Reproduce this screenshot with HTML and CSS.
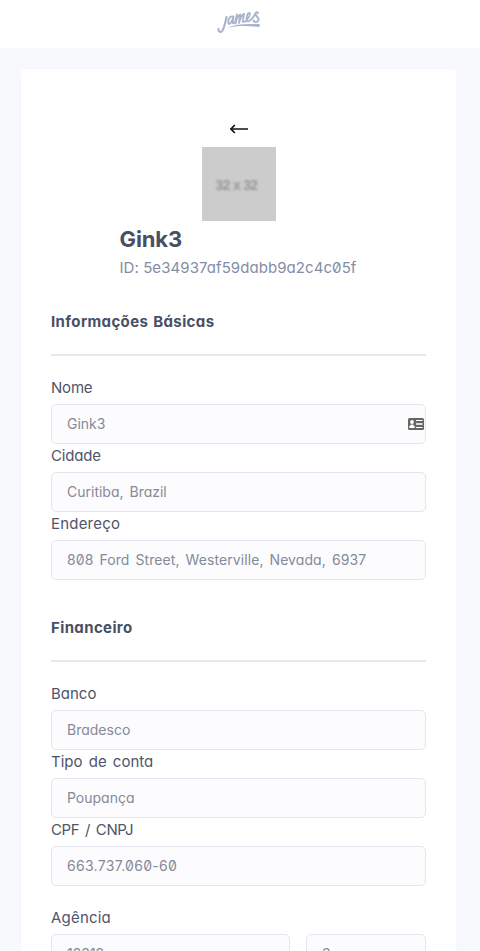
FILE: index.html
```html
<!DOCTYPE html>
<html lang="pt-BR">
<head>
<meta charset="utf-8">
<title>James</title>
<link rel="stylesheet" href="styles.css">
</head>
<body>
<header class="topbar">
  <svg class="logo" viewBox="0 0 44 24" role="img" aria-label="James">
    <g fill="none" stroke="#a9b3cd" stroke-linecap="round" stroke-linejoin="round">
      <path stroke-width="2.100" d="M9.500 7C8.500 12 7.500 17 5.500 20.500C4 23 1 22 1.500 19"/>
      <path stroke-width="1.800" d="M16 6.500C13 5.500 10.500 10 11.500 13.500C13 15 15.500 11 16.500 6.500L15.700 13.300L18 12.500L20 4.500L18.500 13.500C19.500 9.500 21.500 5 23.200 4.500L22 13C23.200 9 25 4.300 27 4L25.800 11.800L28.500 11.500C31.500 8 34 4.500 32.500 3C30.500 2.500 28.800 8 30 11C31.500 13 36 8 39 3"/>
      <path stroke-width="1.900" d="M41 3C40 1.500 38 2.500 38.500 4.500C39 6.500 42.500 7.500 41.500 10.500C40 12.500 37 12.500 36.500 10.500"/>
    </g>
    <path fill="#a9b3cd" d="M10 17.800C19 13.800 31 13.800 43 14.300L42.300 17.300C31 15.200 20 15.500 10 17.800Z"/>
  </svg>
</header>
<main class="card">
  <section class="profile">
    <a class="back" href="#" aria-label="Voltar"><svg width="20" height="12" viewBox="0 0 20 12"><path d="M1.500 6H19" stroke="#111" stroke-width="1.500"/><path d="M5.800 2L2 6L5.800 10" fill="none" stroke="#111" stroke-width="1.700"/></svg></a>
    <div class="avatar"><span>32 x 32</span></div>
    <div class="identity">
      <h1>Gink3</h1>
      <p>ID: 5e34937af59dabb9a2c4c05f</p>
    </div>
  </section>
  <section class="group">
    <h2>Informações Básicas</h2>
    <div class="field"><label class="tight">Nome</label>
      <div class="input"><span>Gink3</span>
        <svg class="contact" width="16" height="12" viewBox="0 0 16 12"><rect width="16" height="12" rx="1.500" fill="#666"/><circle cx="4" cy="4" r="1.900" fill="#fff"/><path d="M1.300 10V8.500L3 6.500H5L6.700 8.500V10Z" fill="#fff"/><path d="M8 2.500H14.500M8 9.500H14.500" stroke="#fff"/><path d="M8 6H14.500" stroke="#ddd" stroke-width="2"/></svg>
      </div></div>
    <div class="field"><label class="tight">Cidade</label><div class="input"><span>Curitiba, Brazil</span></div></div>
    <div class="field"><label class="wide">Endereço</label><div class="input"><span class="street">808 Ford Street, Westerville, Nevada, 6937</span></div></div>
  </section>
  <section class="group">
    <h2>Financeiro</h2>
    <div class="field"><label>Banco</label><div class="input"><span>Bradesco</span></div></div>
    <div class="field"><label>Tipo de conta</label><div class="input"><span>Poupança</span></div></div>
    <div class="field"><label class="caps">CPF / CNPJ</label><div class="input"><span class="document">663.737.060-60</span></div></div>
    <div class="field agency"><label class="wide">Agência</label>
      <div class="pair"><div class="input"><span>12312</span></div><div class="input"><span>3</span></div></div></div>
  </section>
</main>
</body>
</html>
```

FILE: styles.css
```css
* { box-sizing: border-box; }
body {
  margin: 0;
  height: 951px;
  overflow: hidden;
  background: #f7f9fd;
  color: #50556a;
  font: 400 15px/24px Inter, "Open Sans", sans-serif;
  font-feature-settings: "cv11" 1, "zero" 1;
  word-spacing: 2px;
}
h1, h2, p { margin: 0; }
.topbar { height: 48px; background: #fff; display: flex; justify-content: center; padding-top: 10px; }
.logo { width: 44px; height: 24px; margin-right: 2px; }
.card {
  margin: 21px 24px 0 21px;
  padding: 48px 30px 30px;
  height: 1100px;
  background: #fff;
  border-radius: 4px;
  box-shadow: 0 0 2px rgba(0, 0, 0, .03);
}
.profile { display: flex; flex-direction: column; align-items: center; }
.back { display: flex; align-items: center; height: 24px; margin-bottom: 6px; }
.avatar {
  display: flex; align-items: center; justify-content: center;
  width: 74px; height: 74px; background: #ccc;
  color: #999; font: bold 14px "Liberation Sans", sans-serif;
  letter-spacing: -.7px; word-spacing: 0; padding-top: 2px; padding-right: 4px;
}
.avatar span { filter: blur(1px); }
.identity { width: 238px; padding-top: 3px; }
h1 { font-size: 22px; line-height: 30px; font-weight: 700; letter-spacing: -.1px; color: #4a4f64; }
.identity p {
  color: #848da5; line-height: 28px; font-size: 15px;
  letter-spacing: .07px; word-spacing: 0;
}
h2 {
  font-size: 15px; line-height: 24px; font-weight: 700; letter-spacing: .38px;
  word-spacing: 1px; color: #4a4f64;
  padding-bottom: 20px; margin-bottom: 20px;
  border-bottom: 2px solid #e4e7ec;
}
.group { padding-top: 28px; }
.group + .group { padding-top: 0; margin-top: 36px; }
label { display: block; margin-bottom: 4px; }
.wide { letter-spacing: .2px; }
.tight { letter-spacing: -.2px; }
.caps { letter-spacing: -.4px; }
.input {
  display: flex; align-items: center; justify-content: space-between;
  height: 40px; padding-left: 15px; padding-right: 1px;
  border: 1px solid #e4e6ef; border-radius: 5px;
  background: #fcfcfe; color: #858a98; font-size: 14px;
}
.street { letter-spacing: .08px; }
.document { letter-spacing: .3px; }
.agency { margin-top: 20px; }
.pair { display: grid; grid-template-columns: 239px 120px; gap: 16px; }
```
